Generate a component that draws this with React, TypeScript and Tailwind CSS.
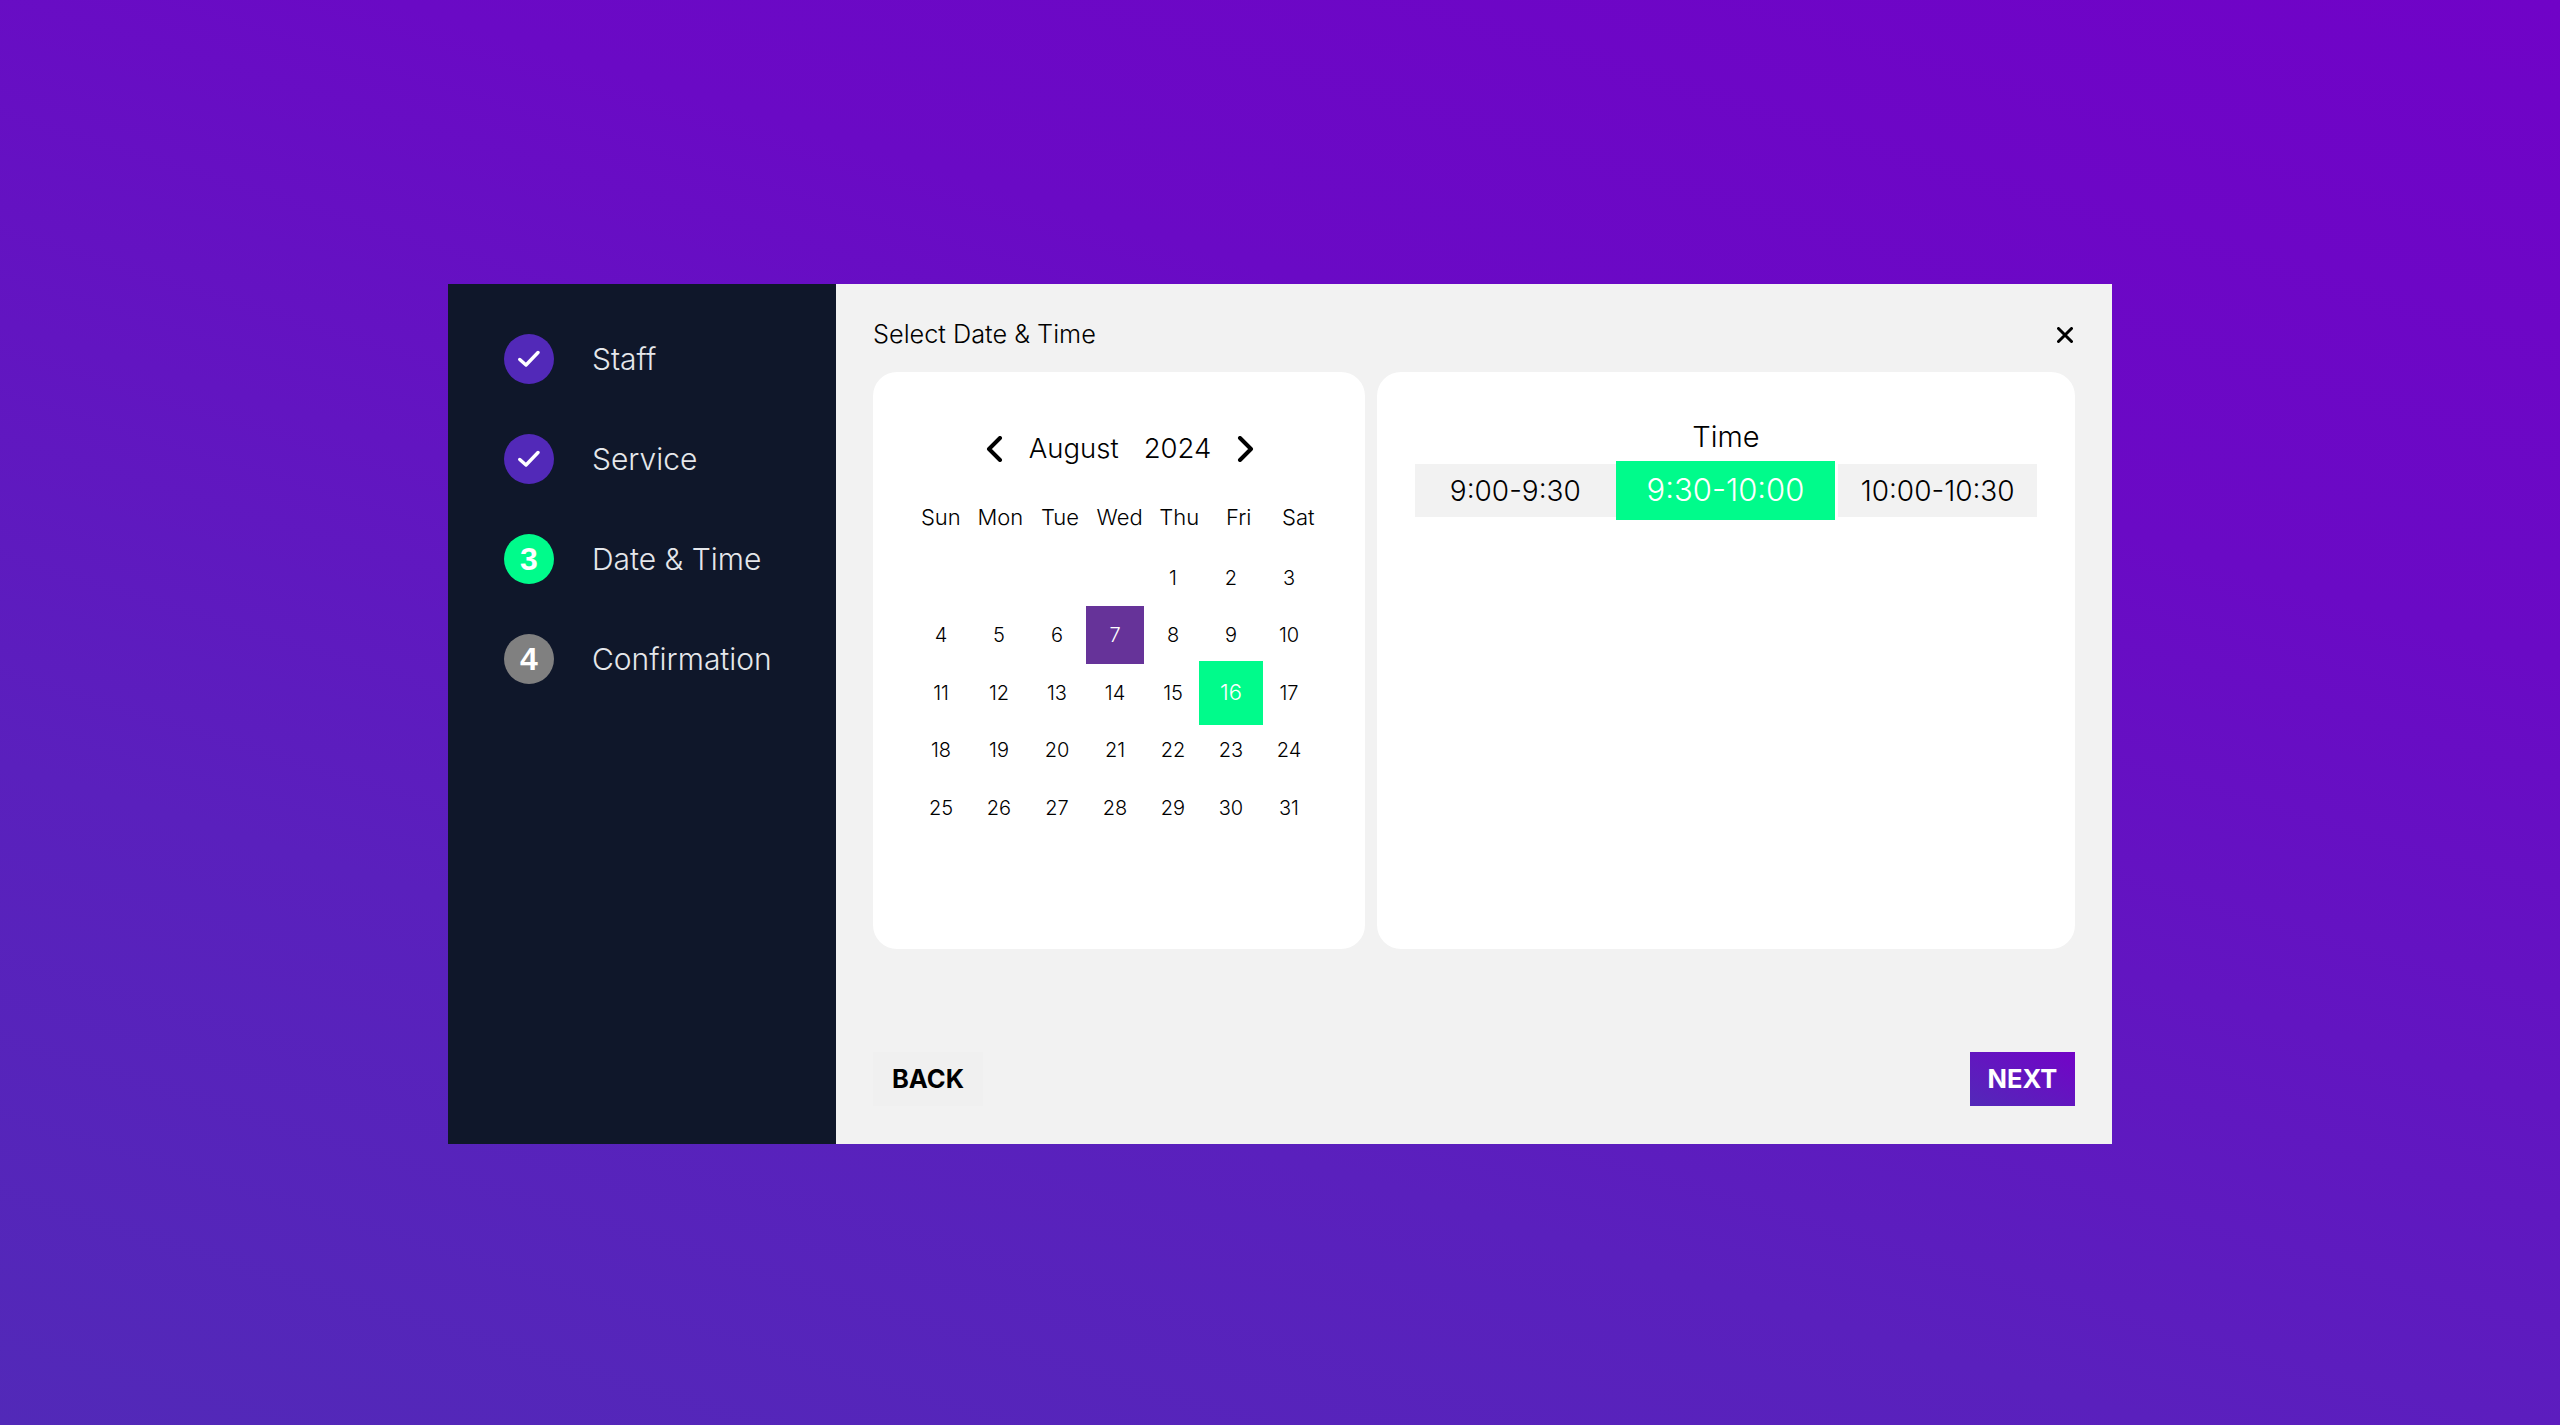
const steps = [
  { label: "Staff", kind: "done" },
  { label: "Service", kind: "done" },
  { label: "Date & Time", kind: "current", n: "3" },
  { label: "Confirmation", kind: "todo", n: "4" },
];
const weekdays = ["Sun", "Mon", "Tue", "Wed", "Thu", "Fri", "Sat"];
const days: (number | null)[] = [null, null, null, null, ...Array.from({ length: 31 }, (_, i) => i + 1)];
const font = { fontFamily: '"Inter", "Liberation Sans", sans-serif' };

function Check() {
  return (
    <svg width="22" height="18" viewBox="0 0 22 18" fill="none">
      <path d="M1.8 9.5 L8 15 L20 2.5" stroke="#fff" strokeWidth="3.4" strokeLinecap="round" strokeLinejoin="round" />
    </svg>
  );
}

export default function App() {
  return (
    <div className="w-full h-[1425px] flex items-center justify-center bg-[linear-gradient(197deg,#7003c7_0%,#6a0ac5_30%,#5a20bd_70%,#5229b8_100%)] pt-[3px] font-[350]" style={font}>
      <div className="w-[1664px] h-[860px] flex bg-[#f2f2f2]">
        <aside className="w-[388px] shrink-0 bg-[#0f172a] pl-[56px] pt-[50px] flex flex-col gap-[50px]">
          {steps.map((s) => (
            <div key={s.label} className="flex items-center gap-[38px] h-[50px]">
              <div
                className={
                  s.kind === "done"
                    ? "w-[50px] h-[50px] rounded-full flex items-center justify-center bg-[#5229b8]"
                    : s.kind === "current"
                    ? "w-[50px] h-[50px] rounded-full flex items-center justify-center bg-[#00fb8b]"
                    : "w-[50px] h-[50px] rounded-full flex items-center justify-center bg-[#808080]"
                }
              >
                {s.kind === "done" ? (
                  <Check />
                ) : (
                  <span className="text-white font-bold text-[32px] leading-none font-['Liberation_Sans']">{s.n}</span>
                )}
              </div>
              <span className="text-[#e5e7eb] text-[30px] leading-none">{s.label}</span>
            </div>
          ))}
        </aside>
        <main className="flex-1 flex flex-col px-[37px]">
          <div className="h-[88px] flex items-center justify-between text-black">
            <span className="text-[25.3px] leading-none mt-[12px]">Select Date &amp; Time</span>
            <svg width="16" height="16" viewBox="0 0 16 16" fill="none" className="mt-[14px] mr-[2px]">
              <path d="M1.5 1.5 L14.5 14.5 M14.5 1.5 L1.5 14.5" stroke="#000" strokeWidth="3" strokeLinecap="round" />
            </svg>
          </div>
          <div className="flex gap-[12px] h-[577px]">
            <section className="w-[492px] bg-white rounded-[24px] pl-[39px] pt-[61px]">
              <div className="flex items-center justify-center w-[416px] h-[32px] text-black text-[27.5px] leading-none">
                <svg width="18" height="26" viewBox="0 0 18 26" fill="none" className="mr-[26px]">
                  <path d="M15 2 L4 13 L15 24" stroke="#000" strokeWidth="4" strokeLinecap="round" strokeLinejoin="round" />
                </svg>
                <span>August</span>
                <span className="ml-[25px]">2024</span>
                <svg width="18" height="26" viewBox="0 0 18 26" fill="none" className="ml-[26px]">
                  <path d="M3 2 L14 13 L3 24" stroke="#000" strokeWidth="4" strokeLinecap="round" strokeLinejoin="round" />
                </svg>
              </div>
              <div className="grid grid-cols-[repeat(7,59.6px)] -ml-[1px] mt-[38px] h-[28px] text-black text-[22px] leading-[28px] text-center">
                {weekdays.map((d) => (
                  <span key={d}>{d}</span>
                ))}
              </div>
              <div className="grid grid-cols-[repeat(7,58px)] auto-rows-[57.5px] mt-[18px] text-black text-[20px]">
                {days.map((d, i) => (
                  <div key={i} className="flex items-center justify-center">
                    {d === 7 ? (
                      <span className="w-[58px] h-[58px] flex items-center justify-center bg-[#663399] text-white">7</span>
                    ) : d === 16 ? (
                      <span className="w-[64px] h-[64px] shrink-0 flex items-center justify-center bg-[#00fb8b] text-white text-[22px]">16</span>
                    ) : (
                      d
                    )}
                  </div>
                ))}
              </div>
            </section>
            <section className="w-[698px] bg-white rounded-[24px] px-[38px] pt-[47px]">
              <div className="text-center text-black text-[29px] leading-[36px]">Time</div>
              <div className="flex items-center h-[59px] mt-[6px] text-black text-[28px]">
                <div className="w-[201px] h-[53px] bg-[#f2f2f2] flex items-center justify-center">9:00-9:30</div>
                <div className="w-[220px] h-[59px] bg-[#00fb8b] text-white text-[31px] flex items-center justify-center">9:30-10:00</div>
                <div className="w-[199px] h-[53px] ml-[3px] bg-[#f2f2f2] flex items-center justify-center">10:00-10:30</div>
              </div>
            </section>
          </div>
          <div className="flex justify-between mt-[103px]">
            <button className="w-[110px] h-[54px] bg-[#f0f0f0] text-black font-bold text-[25.5px] leading-none">BACK</button>
            <button className="w-[105px] h-[54px] bg-[linear-gradient(to_top_right,#5229b8,#7303c7)] text-white font-bold text-[25.5px] leading-none">NEXT</button>
          </div>
        </main>
      </div>
    </div>
  );
}
